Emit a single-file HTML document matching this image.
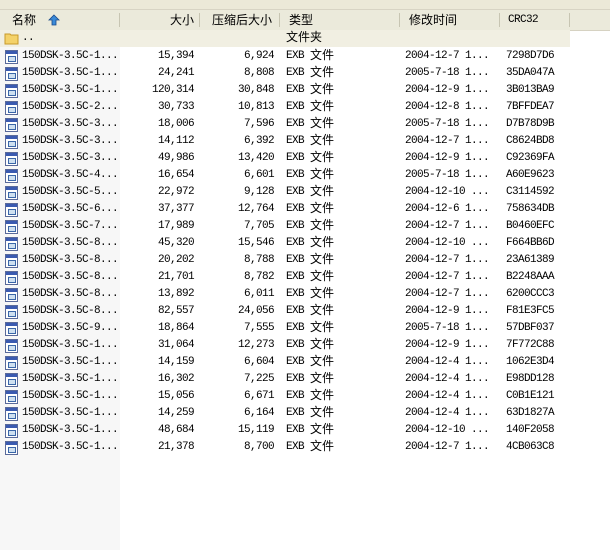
<!DOCTYPE html><html><head><meta charset="utf-8"><style>
body{margin:0;width:610px;height:550px;background:#fff;position:relative;overflow:hidden;font-family:"Liberation Mono","Noto Sans CJK SC",monospace;font-size:11px;color:#000}
.top{position:absolute;left:0;top:0;width:610px;height:9px;background:#ece9d8;border-bottom:1px solid #d8d4c4}
.hdr{position:absolute;left:0;top:10px;width:610px;height:20px;background:#ebeadb;border-bottom:1px solid #d6d2c2;font-family:"Noto Sans CJK SC",sans-serif;font-size:12px}
.hdr div{position:absolute;top:0;height:20px;line-height:20px}
.sep{position:absolute;top:3px;width:1px;height:14px;background:#c7c5b2}
.namecol{position:absolute;left:0;top:31px;width:120px;height:519px;background:#f7f7f7}
.row{position:absolute;left:0;height:17px;line-height:17px;width:570px;letter-spacing:-0.6px}
.row span{position:absolute;top:0;white-space:nowrap}
.c1{left:22px}.c2{right:376px}.c3{right:296px}.c4{left:286px}.c5{left:405px}.c6{left:506px}
.row span.cj{font-family:"Noto Sans CJK SC",sans-serif;font-size:12px;letter-spacing:0;top:-2px}
.ic{position:absolute;left:5px;top:2px;width:11px;height:12px;border:1px solid #5a6a9a;background:#fff}
.ic:before{content:"";position:absolute;left:0;top:0;width:11px;height:3px;background:#3a5ab0}
.ic:after{content:"";position:absolute;left:2px;top:5px;width:6px;height:4px;border:1px solid #3a66a8;background:#cfe0f0}
</style></head><body>
<div class="top"></div>
<div class="hdr">
<div style="left:12px">名称</div>
<svg style="position:absolute;left:48px;top:4px" width="12" height="12" viewBox="0 0 12 12"><path d="M6 1 L11 6 H8 V11 H4 V6 H1 Z" fill="#3a8ad8" stroke="#1a4a8a" stroke-width="0.8"/></svg>
<div style="left:170px">大小</div>
<div style="left:212px">压缩后大小</div>
<div style="left:289px">类型</div>
<div style="left:409px">修改时间</div>
<div style="left:508px;font-family:'Liberation Mono';font-size:11px;letter-spacing:-0.6px">CRC32</div>
<span class="sep" style="left:119px"></span><span class="sep" style="left:199px"></span><span class="sep" style="left:279px"></span><span class="sep" style="left:399px"></span><span class="sep" style="left:499px"></span><span class="sep" style="left:569px"></span>
</div>
<div class="namecol"></div>
<div class="row" style="top:30px;background:#f1efe2">
<svg style="position:absolute;left:4px;top:2px" width="16" height="13" viewBox="0 0 16 13"><path d="M1 2 H6 L7 3 H14 V12 H1 Z" fill="#f4d26a" stroke="#c89a2a"/></svg>
<span class="c1">..</span><span class="c4 cj">文件夹</span></div>
<div id="rows"></div>
<script>
var d=[["1","15,394","6,924","2004-12-7 1...","7298D7D6"],["1","24,241","8,808","2005-7-18 1...","35DA047A"],["1","120,314","30,848","2004-12-9 1...","3B013BA9"],["2","30,733","10,813","2004-12-8 1...","7BFFDEA7"],["3","18,006","7,596","2005-7-18 1...","D7B78D9B"],["3","14,112","6,392","2004-12-7 1...","C8624BD8"],["3","49,986","13,420","2004-12-9 1...","C92369FA"],["4","16,654","6,601","2005-7-18 1...","A60E9623"],["5","22,972","9,128","2004-12-10 ...","C3114592"],["6","37,377","12,764","2004-12-6 1...","758634DB"],["7","17,989","7,705","2004-12-7 1...","B0460EFC"],["8","45,320","15,546","2004-12-10 ...","F664BB6D"],["8","20,202","8,788","2004-12-7 1...","23A61389"],["8","21,701","8,782","2004-12-7 1...","B2248AAA"],["8","13,892","6,011","2004-12-7 1...","6200CCC3"],["8","82,557","24,056","2004-12-9 1...","F81E3FC5"],["9","18,864","7,555","2005-7-18 1...","57DBF037"],["1","31,064","12,273","2004-12-9 1...","7F772C88"],["1","14,159","6,604","2004-12-4 1...","1062E3D4"],["1","16,302","7,225","2004-12-4 1...","E98DD128"],["1","15,056","6,671","2004-12-4 1...","C0B1E121"],["1","14,259","6,164","2004-12-4 1...","63D1827A"],["1","48,684","15,119","2004-12-10 ...","140F2058"],["1","21,378","8,700","2004-12-7 1...","4CB063C8"]];
var h="";d.forEach(function(r,i){h+='<div class="row" style="top:'+(48+i*17)+'px"><i class="ic"></i><span class="c1">150DSK-3.5C-'+r[0]+'...</span><span class="c2">'+r[1]+'</span><span class="c3">'+r[2]+'</span><span class="c4">EXB</span><span class="cj" style="left:310px">文件</span><span class="c5">'+r[3]+'</span><span class="c6">'+r[4]+'</span></div>';});
document.getElementById("rows").innerHTML=h;
</script>
</body></html>
